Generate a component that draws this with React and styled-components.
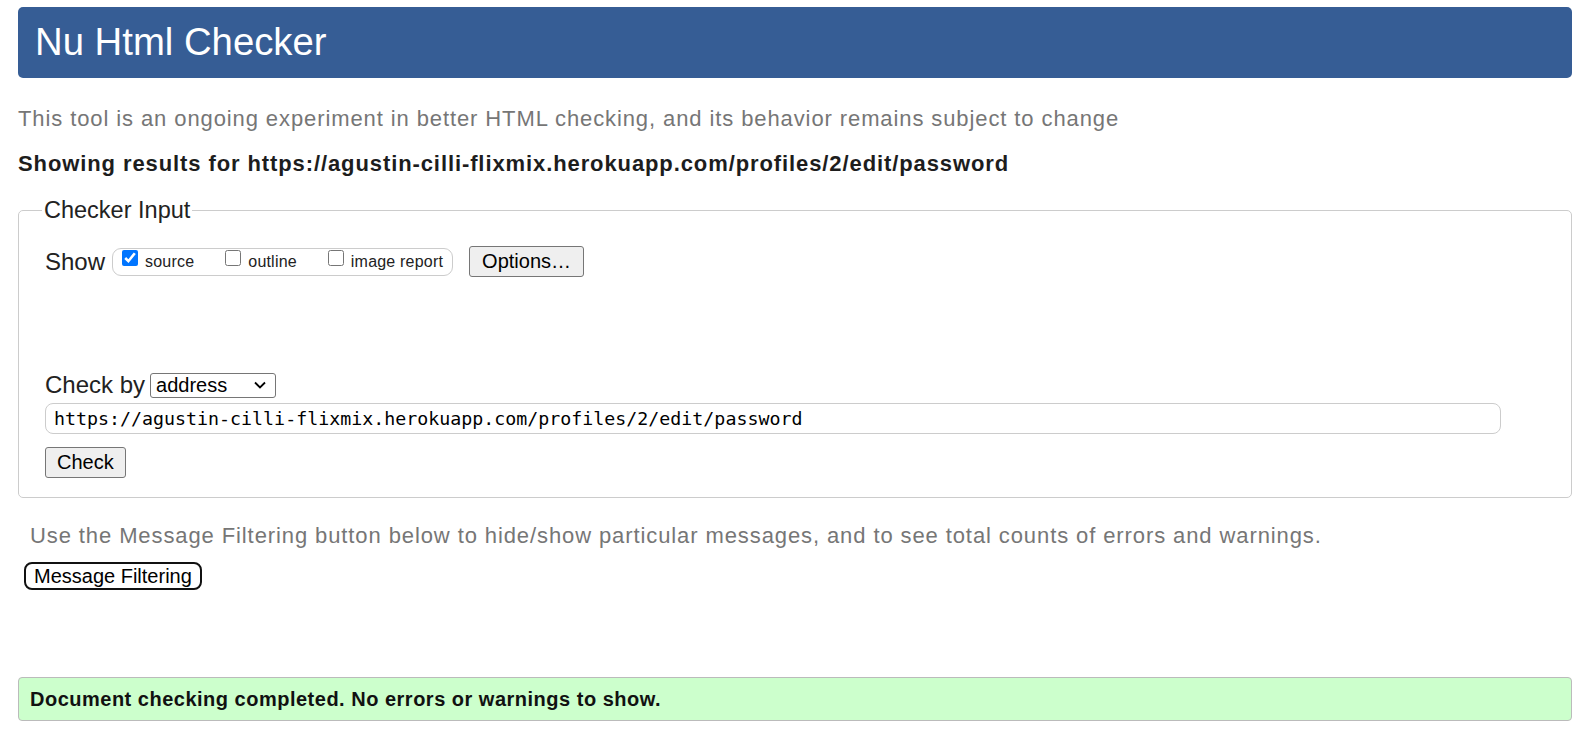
import React from "react";
import styled, { createGlobalStyle } from "styled-components";

const GlobalStyle = createGlobalStyle`
  body {
    margin: 0;
    background: #ffffff;
    font-family: "Liberation Sans", Arial, sans-serif;
    color: #222222;
  }
`;

const StyledPage = styled.div`
  display: flex;
  flex-direction: column;
  padding: 7px 8px 0 18px;
`;

const StyledHeader = styled.h1`
  margin: 0;
  height: 71px;
  line-height: 70px;
  padding-left: 17px;
  background-color: #365d95;
  border-radius: 5px;
  color: #ffffff;
  font-size: 38.3px;
  font-weight: normal;
`;

const StyledIntro = styled.p`
  margin: 27px 0 0 ${(p) => p.indent || 0}px;
  font-size: 22px;
  line-height: 28px;
  letter-spacing: 0.9px;
  color: #767676;
`;

const StyledResultsFor = styled.p`
  margin: 17px 0 0;
  font-size: 22px;
  line-height: 28px;
  letter-spacing: 0.9px;
  font-weight: bold;
  color: #1d1d1d;
`;

const StyledFieldset = styled.fieldset`
  margin: 18px 0 0;
  padding: 0 25px 19px 26px;
  border: 1px solid #cccccc;
  border-radius: 5px;
  min-width: 0;
`;

const StyledLegend = styled.legend`
  padding: 0 2px;
  margin-left: -3px;
  font-size: 23.5px;
  line-height: 28px;
  color: #222222;
`;

const StyledRow = styled.div`
  display: flex;
  align-items: center;
  margin-top: ${(p) => p.top || 0}px;
`;

const StyledLabel = styled.span`
  font-size: 24px;
  line-height: 28px;
  color: #222222;
  margin-right: ${(p) => p.gap || 8}px;
`;

const StyledGroup = styled.div`
  display: flex;
  align-items: center;
  height: 26px;
  padding: 0 9px 0 9px;
  border: 1px solid #cccccc;
  border-radius: 9px;
`;

const StyledCheck = styled.label`
  display: flex;
  align-items: center;
  margin-right: ${(p) => p.gap || 0}px;
  font-size: 16px;
  letter-spacing: 0.2px;
  color: #222222;

  input {
    width: 16px;
    height: 16px;
    margin: 0 7px 7px 0;
    accent-color: #0075ff;
  }
`;

const StyledButton = styled.button`
  font-family: "Liberation Sans", Arial, sans-serif;
  font-size: 20px;
  color: #000000;
  background: #efefef;
  border: 1px solid #767676;
  border-radius: 3px;
  height: ${(p) => p.h || 31}px;
  padding: 0 ${(p) => p.px || 11}px;
  margin-left: ${(p) => p.left || 0}px;
`;

const StyledSelectWrap = styled.div`
  position: relative;
  width: 126px;
  height: 25px;
`;

const StyledSelect = styled.select`
  appearance: none;
  width: 100%;
  height: 100%;
  margin: 0;
  padding: 0 0 0 5px;
  font-family: "Liberation Sans", Arial, sans-serif;
  font-size: 20px;
  color: #000000;
  background: #ffffff;
  border: 1px solid #767676;
  border-radius: 3px;
`;

const StyledChevron = styled.svg`
  position: absolute;
  right: 10px;
  top: 8px;
  pointer-events: none;
`;

const StyledUrlInput = styled.input`
  display: block;
  box-sizing: border-box;
  width: 97%;
  height: 31px;
  margin-top: 4px;
  padding: 0 8px;
  font-family: "DejaVu Sans Mono", "Liberation Mono", monospace;
  font-size: 18.3px;
  color: #000000;
  border: 1px solid #cccccc;
  border-radius: 8px;
`;

const StyledCheckRow = styled.div`
  margin-top: 13px;
`;

const StyledFilterButton = styled.button`
  align-self: flex-start;
  margin: 12px 0 0 6px;
  height: 28px;
  padding: 0 8px;
  font-family: "Liberation Sans", Arial, sans-serif;
  font-size: 20px;
  color: #000000;
  background: #ffffff;
  border: 2px solid #111111;
  border-radius: 8px;
`;

const StyledSuccess = styled.div`
  margin-top: 87px;
  height: 42px;
  display: flex;
  align-items: center;
  padding-left: 11px;
  background: #ccffcc;
  border: 1px solid #bbbbbb;
  border-radius: 4px;
  font-size: 20px;
  letter-spacing: 0.5px;
  font-weight: bold;
  color: #111111;
`;

const url = "https://agustin-cilli-flixmix.herokuapp.com/profiles/2/edit/password";

export default function App() {
  return (
    <StyledPage>
      <GlobalStyle />
      <StyledHeader>Nu Html Checker</StyledHeader>
      <StyledIntro>
        This tool is an ongoing experiment in better HTML checking, and its behavior remains subject to change
      </StyledIntro>
      <StyledResultsFor>Showing results for {url}</StyledResultsFor>
      <StyledFieldset>
        <StyledLegend>Checker Input</StyledLegend>
        <StyledRow top={22}>
          <StyledLabel gap={7}>Show</StyledLabel>
          <StyledGroup>
            <StyledCheck gap={31}>
              <input type="checkbox" defaultChecked />
              source
            </StyledCheck>
            <StyledCheck gap={31}>
              <input type="checkbox" />
              outline
            </StyledCheck>
            <StyledCheck>
              <input type="checkbox" />
              image report
            </StyledCheck>
          </StyledGroup>
          <StyledButton left={16} px={12}>Options…</StyledButton>
        </StyledRow>
        <StyledRow top={94}>
          <StyledLabel gap={5}>Check by</StyledLabel>
          <StyledSelectWrap>
            <StyledSelect defaultValue="address">
              <option value="address">address</option>
              <option value="file">file upload</option>
              <option value="text">text input</option>
            </StyledSelect>
            <StyledChevron width="12" height="8" viewBox="0 0 12 8">
              <path d="M1 1.5 L6 6.5 L11 1.5" fill="none" stroke="#000" strokeWidth="1.8" />
            </StyledChevron>
          </StyledSelectWrap>
        </StyledRow>
        <StyledUrlInput type="text" defaultValue={url} />
        <StyledCheckRow>
          <StyledButton px={11}>Check</StyledButton>
        </StyledCheckRow>
      </StyledFieldset>
      <StyledIntro indent={12} style={{ marginTop: 24 }}>
        Use the Message Filtering button below to hide/show particular messages, and to see total counts of errors and warnings.
      </StyledIntro>
      <StyledFilterButton>Message Filtering</StyledFilterButton>
      <StyledSuccess>Document checking completed. No errors or warnings to show.</StyledSuccess>
    </StyledPage>
  );
}
